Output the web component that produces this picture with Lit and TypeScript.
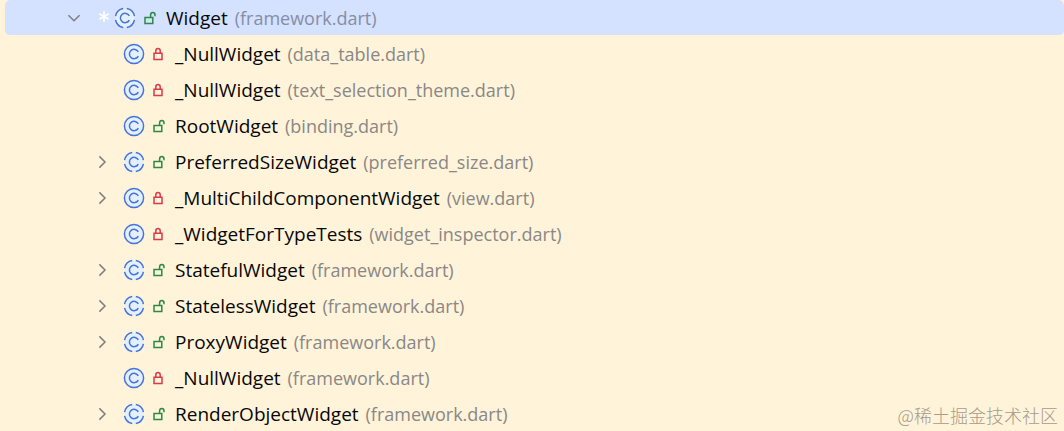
import { LitElement, html, css, svg } from "lit";
import { customElement, property } from "lit/decorators.js";

interface ClassEntry {
  name: string;
  file: string;
  isPrivate?: boolean;
  isAbstract?: boolean;
  expandable?: boolean;
}

const ROOT: ClassEntry = { name: "Widget", file: "framework.dart", isAbstract: true, expandable: true };

const CHILDREN: ClassEntry[] = [
  { name: "_NullWidget", file: "data_table.dart", isPrivate: true },
  { name: "_NullWidget", file: "text_selection_theme.dart", isPrivate: true },
  { name: "RootWidget", file: "binding.dart" },
  { name: "PreferredSizeWidget", file: "preferred_size.dart", isAbstract: true, expandable: true },
  { name: "_MultiChildComponentWidget", file: "view.dart", isPrivate: true, expandable: true },
  { name: "_WidgetForTypeTests", file: "widget_inspector.dart", isPrivate: true },
  { name: "StatefulWidget", file: "framework.dart", isAbstract: true, expandable: true },
  { name: "StatelessWidget", file: "framework.dart", isAbstract: true, expandable: true },
  { name: "ProxyWidget", file: "framework.dart", isAbstract: true, expandable: true },
  { name: "_NullWidget", file: "framework.dart", isPrivate: true },
  { name: "RenderObjectWidget", file: "framework.dart", isAbstract: true, expandable: true },
];

@customElement("class-icon")
export class ClassIcon extends LitElement {
  @property({ type: Boolean }) broken = false;

  static styles = css`
    :host { display: block; width: 22px; height: 22px; }
    svg { display: block; }
    .disc { fill: #e4f1fd; }
    .line { fill: none; stroke: #4673dc; stroke-width: 1.5; }
  `;

  render() {
    return html`<svg width="22" height="22" viewBox="0 0 22 22" aria-hidden="true">
      <circle class="disc" cx="11" cy="11" r="9.6" />
      ${this.broken
        ? svg`<path class="line" d="M12.8 1.57A9.6 9.6 0 0 1 20.43 9.2M20.43 12.8A9.6 9.6 0 0 1 12.8 20.43M9.2 20.43A9.6 9.6 0 0 1 1.57 12.8M1.57 9.2A9.6 9.6 0 0 1 9.2 1.57" />`
        : svg`<circle class="line" cx="11" cy="11" r="9.6" />`}
      <path class="line" d="M15.3 8.9A4.7 4.7 0 1 0 15.3 13.1" />
    </svg>`;
  }
}

@customElement("access-icon")
export class AccessIcon extends LitElement {
  @property({ type: Boolean }) locked = false;

  static styles = css`
    :host { display: block; width: 14px; height: 16px; }
    svg { display: block; }
    .locked { fill: none; stroke: #d93a4c; stroke-width: 1.5; }
    .open { fill: none; stroke: #2b8a45; stroke-width: 1.5; }
  `;

  render() {
    return html`<svg width="14" height="16" viewBox="0 0 14 16" aria-hidden="true">
      ${this.locked
        ? svg`<path class="locked" d="M3 7.2H11V13.6H3ZM4.8 7.2V4.9A2.2 2.5 0 0 1 9.2 4.9V7.2" />`
        : svg`<path class="open" d="M3 7.4H10.8V13.4H3ZM8.6 7.4V5A2.2 2.4 0 0 1 13 5V6.2" />`}
    </svg>`;
  }
}

@customElement("class-row")
export class ClassRow extends LitElement {
  @property({ attribute: false }) entry!: ClassEntry;
  @property({ type: Boolean, reflect: true }) selected = false;

  static styles = css`
    :host { display: block; height: 36px; box-sizing: border-box; }
    .row { display: flex; align-items: center; height: 36px; padding-left: 87px; }
    :host([selected]) { border-bottom: 1px solid transparent; background: #d4e1ff; background-clip: padding-box; border-radius: 5px; }
    :host([selected]) .row { padding-left: 59px; }
    .toggle { display: grid; place-items: center; width: 20px; height: 20px; padding: 0; border: 0; background: none; cursor: pointer; }
    .spacer { width: 20px; }
    .arrow { fill: none; stroke: #817f80; stroke-width: 1.5; }
    .gap { width: 11px; }
    .star { display: grid; justify-content: end; width: 30px; }
    .star path { fill: none; stroke: #fbfdff; stroke-width: 1.8; }
    access-icon { margin: 0 10px 0 6px; }
    .label { white-space: nowrap; }
    .name { color: #080808; font-size: 19px; }
    .file { color: #8a8886; font-size: 18px; padding-left: 2px; }
    :host([selected]) .file { color: #868ea4; }
  `;

  render() {
    const { name, file, isPrivate, isAbstract, expandable } = this.entry;
    return html`<div class="row">
      ${expandable
        ? html`<button class="toggle" type="button" aria-label=${`Toggle ${name}`}>
            <svg width="14" height="14" viewBox="0 0 14 14" aria-hidden="true">
              <path class="arrow" d=${this.selected ? "M1.4 4.2L7 9.8L12.6 4.2" : "M4.4 1.4L10 7L4.4 12.6"} />
            </svg>
          </button>`
        : html`<span class="spacer"></span>`}
      ${this.selected
        ? html`<span class="star"><svg width="16" height="14" viewBox="0 0 16 14" aria-hidden="true">
            <path d="M6 0V11M1.2 2.8L10.8 8.2M10.8 2.8L1.2 8.2" />
          </svg></span>`
        : html`<span class="gap"></span>`}
      <class-icon ?broken=${!!isAbstract}></class-icon>
      <access-icon ?locked=${!!isPrivate}></access-icon>
      <span class="label"><span class="name">${name}</span> <span class="file">(${file})</span></span>
    </div>`;
  }
}

@customElement("app-root")
export class AppRoot extends LitElement {
  static styles = css`
    :host {
      display: block;
      min-height: 100vh;
      position: relative;
      overflow: hidden;
      background: #fff3da;
      font: 19px/24px "Open Sans", "Noto Sans CJK SC", sans-serif;
    }
    .tree, .children { display: block; margin: 0; padding: 0; list-style: none; }
    .tree { height: 100vh; overflow: hidden; }
    .node { display: block; padding-left: 5px; }
    .watermark {
      position: absolute;
      right: 6px;
      bottom: 4px;
      color: #a59c8c;
      font: 300 18px/24px "Noto Sans CJK SC", sans-serif;
    }
  `;

  render() {
    return html`
      <ul class="tree" role="tree">
        <li role="treeitem" aria-expanded="true" aria-selected="true">
          <div class="node"><class-row selected .entry=${ROOT}></class-row></div>
          <ul class="children" role="group">
            ${CHILDREN.map((entry) => html`<li class="node" role="treeitem"><class-row .entry=${entry}></class-row></li>`)}
          </ul>
        </li>
      </ul>
      <span class="watermark">@稀土掘金技术社区</span>
    `;
  }
}
